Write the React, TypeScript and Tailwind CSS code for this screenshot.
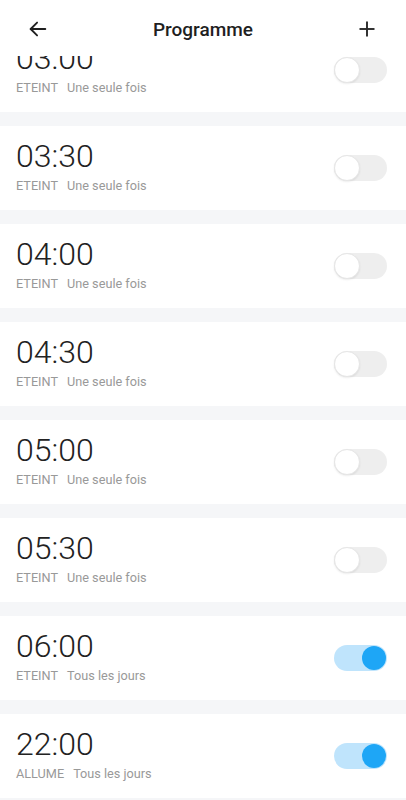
import React, { useState } from 'react';

interface Schedule {
  id: number;
  time: string;
  action: string;
  repeat: string;
  enabled: boolean;
}

const initialSchedules: Schedule[] = [
  { id: 1, time: '03:00', action: 'ETEINT', repeat: 'Une seule fois', enabled: false },
  { id: 2, time: '03:30', action: 'ETEINT', repeat: 'Une seule fois', enabled: false },
  { id: 3, time: '04:00', action: 'ETEINT', repeat: 'Une seule fois', enabled: false },
  { id: 4, time: '04:30', action: 'ETEINT', repeat: 'Une seule fois', enabled: false },
  { id: 5, time: '05:00', action: 'ETEINT', repeat: 'Une seule fois', enabled: false },
  { id: 6, time: '05:30', action: 'ETEINT', repeat: 'Une seule fois', enabled: false },
  { id: 7, time: '06:00', action: 'ETEINT', repeat: 'Tous les jours', enabled: true },
  { id: 8, time: '22:00', action: 'ALLUME', repeat: 'Tous les jours', enabled: true },
];

const Toggle: React.FC<{ on: boolean; onClick: () => void }> = ({ on, onClick }) => (
  <button
    onClick={onClick}
    className={`relative block h-[26px] w-[53px] rounded-full ${on ? 'bg-[#bfe4fc]' : 'bg-[#eeeeee]'}`}
  >
    {on ? (
      <span className="absolute right-[1px] top-[1px] h-[24px] w-[24px] rounded-full bg-[#1ea6f6]" />
    ) : (
      <span className="absolute left-0 top-0 h-[26px] w-[26px] rounded-full border border-[#e6e6e6] bg-white shadow-[0_1px_2px_rgba(0,0,0,0.08)]" />
    )}
  </button>
);

export default function App() {
  const [schedules, setSchedules] = useState(initialSchedules);

  const toggle = (id: number) =>
    setSchedules((s) => s.map((x) => (x.id === id ? { ...x, enabled: !x.enabled } : x)));

  return (
    <div className="flex h-[800px] w-[406px] flex-col overflow-hidden bg-[#f5f6f8] font-['Roboto',sans-serif]">
      {/* header */}
      <div className="relative z-10 flex h-[56px] shrink-0 items-center justify-between bg-white px-[26px]">
        <svg width="22" height="22" viewBox="0 0 24 24" fill="none" stroke="#1f1f1f" strokeWidth="2" strokeLinecap="round" strokeLinejoin="round" className="ml-[1px] mt-[2px]">
          <path d="M20 12H4" />
          <path d="M11 5l-7 7 7 7" />
        </svg>
        <h1 className="mt-[5px] text-[19px] font-medium text-[#1f1f1f]">Programme</h1>
        <svg width="20" height="20" viewBox="0 0 24 24" fill="none" stroke="#2a2a2a" strokeWidth="2.3" className="mr-[3px] mt-[2px]">
          <path d="M12 3v18" />
          <path d="M3 12h18" />
        </svg>
      </div>

      {/* list */}
      <div className="flex-1 overflow-hidden">
        <div className="-mt-[28px] flex flex-col gap-[14px]">
          {schedules.map((s) => (
            <div key={s.id} className="flex h-[84px] items-start justify-between bg-white pl-4 pr-[19px]">
              <div className="flex flex-col pt-[11px]">
                <div className="text-[32px] font-light leading-[38px] text-[#222222]">{s.time}</div>
                <div className="mt-[3px] flex gap-[9px] text-[12.7px] leading-[16px] text-[#999999]">
                  <span>{s.action}</span>
                  <span>{s.repeat}</span>
                </div>
              </div>
              <div className="flex self-center">
                <Toggle on={s.enabled} onClick={() => toggle(s.id)} />
              </div>
            </div>
          ))}
        </div>
      </div>
    </div>
  );
}
